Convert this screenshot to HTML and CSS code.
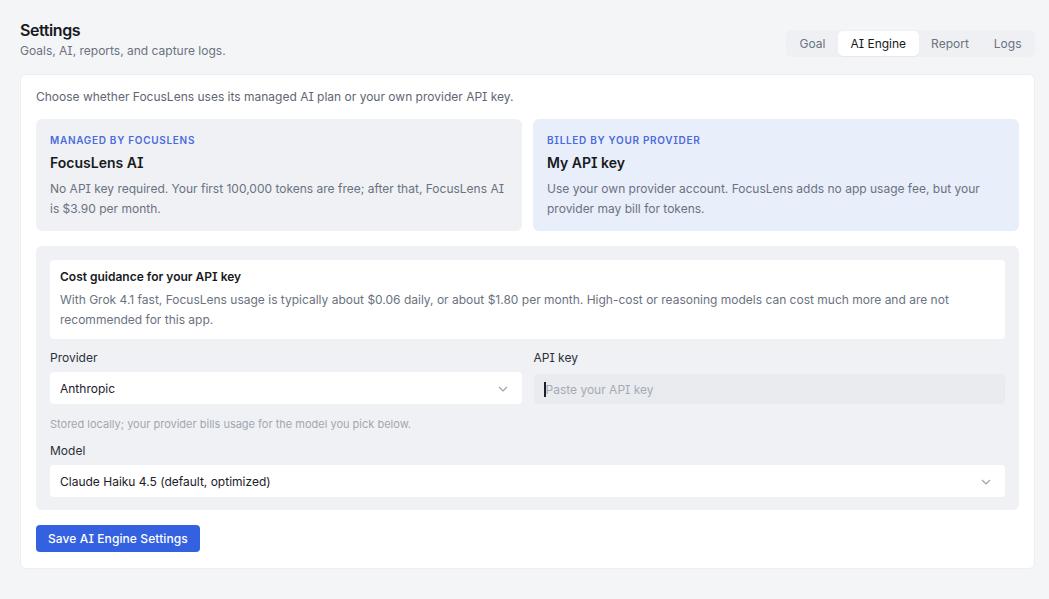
FILE: index.html
```html
<!DOCTYPE html>
<html>
<head>
<meta charset="utf-8">
<link rel="stylesheet" href="styles.css">
</head>
<body>
<div class="page">
  <header class="top">
    <div class="heading">
      <h1>Settings</h1>
      <p class="sub">Goals, AI, reports, and capture logs.</p>
    </div>
    <nav class="tabs">
      <span class="tab">Goal</span>
      <span class="tab active">AI Engine</span>
      <span class="tab">Report</span>
      <span class="tab">Logs</span>
    </nav>
  </header>

  <main class="card">
    <p class="intro">Choose whether FocusLens uses its managed AI plan or your own provider API key.</p>
    <div class="options">
      <div class="option">
        <div class="eyebrow">MANAGED BY FOCUSLENS</div>
        <div class="opt-title">FocusLens AI</div>
        <p class="opt-desc">No API key required. Your first 100,000 tokens are free; after that, FocusLens AI is $3.90 per month.</p>
      </div>
      <div class="option selected">
        <div class="eyebrow">BILLED BY YOUR PROVIDER</div>
        <div class="opt-title">My API key</div>
        <p class="opt-desc">Use your own provider account. FocusLens adds no app usage fee, but your provider may bill for tokens.</p>
      </div>
    </div>

    <section class="panel">
      <div class="guide">
        <div class="guide-title">Cost guidance for your API key</div>
        <p class="guide-desc">With Grok 4.1 fast, FocusLens usage is typically about $0.06 daily, or about $1.80 per month. High-cost or reasoning models can cost much more and are not recommended for this app.</p>
      </div>
      <div class="fields">
        <div class="field">
          <label class="label">Provider</label>
          <div class="select">
            <span>Anthropic</span>
            <svg class="chev" width="10" height="6" viewBox="0 0 10 6"><path d="M1 1 L5 5 L9 1" fill="none" stroke="#9aa1ad" stroke-width="1.1"/></svg>
          </div>
        </div>
        <div class="field">
          <label class="label">API key</label>
          <div class="input"><span class="caret"></span><span class="ph">Paste your API key</span></div>
        </div>
      </div>
      <p class="hint">Stored locally; your provider bills usage for the model you pick below.</p>
      <div class="field">
        <label class="label">Model</label>
        <div class="select">
          <span>Claude Haiku 4.5 (default, optimized)</span>
          <svg class="chev" width="10" height="6" viewBox="0 0 10 6"><path d="M1 1 L5 5 L9 1" fill="none" stroke="#9aa1ad" stroke-width="1.1"/></svg>
        </div>
      </div>
    </section>

    <button class="save">Save AI Engine Settings</button>
  </main>
</div>
</body>
</html>
```

FILE: styles.css
```css
* { box-sizing: border-box; }
html, body { margin: 0; padding: 0; }
body {
  background: #f4f5f7;
  font-family: Inter, "Noto Sans", "Liberation Sans", sans-serif;
  font-feature-settings: "cv08";
  color: #1c2029;
  width: 1049px;
  height: 599px;
  overflow: hidden;
}
.page { padding: 20px 14px 0 20px; }
.top {
  display: flex;
  justify-content: space-between;
  align-items: flex-start;
}
h1 {
  margin: 0;
  font-size: 16px;
  line-height: 20px;
  font-weight: 600;
  color: #171a21;
  letter-spacing: -0.4px;
}
.sub {
  margin: 3px 0 0;
  font-size: 12px;
  line-height: 16px;
  color: #6b7280;
}
.tabs {
  margin-top: 10px;
  display: flex;
  background: #eef0f3;
  border-radius: 6px;
  padding: 1px 1px;
}
.tab {
  font-size: 12px;
  line-height: 25px;
  padding: 0 12.5px;
  color: #6b7280;
  border-radius: 5px;
}
.tab.active {
  background: #ffffff;
  color: #171a21;
  box-shadow: 0 1px 1px rgba(0,0,0,0.04);
}
.card {
  margin-top: 15px;
  background: #ffffff;
  border-radius: 6px;
  border: 1px solid #eceef1;
  padding: 14px 15px 16px;
  width: 1015px;
}
.intro {
  margin: 0;
  font-size: 12px;
  line-height: 16px;
  color: #5f6673;
}
.options {
  margin-top: 14px;
  display: grid;
  grid-template-columns: 1fr 1fr;
  gap: 11px;
}
.option {
  background: #eff1f5;
  border-radius: 6px;
  padding: 14px 14px 12px;
}
.option.selected { background: #e9eefb; }
.eyebrow {
  font-size: 10px;
  line-height: 14px;
  font-weight: 600;
  letter-spacing: 0.07em;
  color: #4a6bdc;
}
.opt-title {
  margin-top: 6px;
  font-size: 14px;
  line-height: 20px;
  font-weight: 600;
  color: #171a21;
}
.opt-desc {
  margin: 6px 0 0;
  font-size: 12px;
  line-height: 20px;
  color: #6b7280;
}
.panel {
  margin-top: 15px;
  background: #f0f1f4;
  border-radius: 6px;
  padding: 14px 14px 13px;
}
.guide {
  background: #ffffff;
  border-radius: 4px;
  padding: 9px 10px 9px;
}
.guide-title {
  font-size: 12px;
  line-height: 16px;
  font-weight: 600;
  color: #171a21;
}
.guide-desc {
  margin: 5px 0 0;
  font-size: 12px;
  line-height: 20px;
  color: #6b7280;
}
.fields {
  margin-top: 11px;
  display: grid;
  grid-template-columns: 1fr 1fr;
  gap: 12px;
}
.field { display: flex; flex-direction: column; }
.label {
  font-size: 12px;
  line-height: 16px;
  color: #2b303a;
  margin-bottom: 6px;
}
.select {
  height: 32px;
  background: #ffffff;
  border-radius: 4px;
  display: flex;
  align-items: center;
  justify-content: space-between;
  padding: 0 14px 0 10px;
  font-size: 12px;
  color: #1c2029;
}
.chev { display: block; margin-top: 1px; }
.input {
  height: 30px;
  margin-top: 2px;
  background: #e9ebef;
  border-radius: 4px;
  display: flex;
  align-items: center;
  padding: 0 10px;
  font-size: 12px;
  color: #a4abb6;
}
.caret {
  width: 2px;
  height: 15px;
  background: #1c2029;
}
.hint {
  margin: 12px 0 11px;
  font-size: 11px;
  line-height: 16px;
  color: #a1a7b2;
}
.save {
  margin-top: 15px;
  display: block;
  height: 27px;
  padding: 0 12px;
  border: none;
  border-radius: 4px;
  background: #3461e0;
  color: #ffffff;
  font-family: Inter, "Noto Sans", "Liberation Sans", sans-serif;
  font-feature-settings: "cv08";
  font-size: 12px;
  font-weight: 500;
  letter-spacing: 0.1px;
}
```
